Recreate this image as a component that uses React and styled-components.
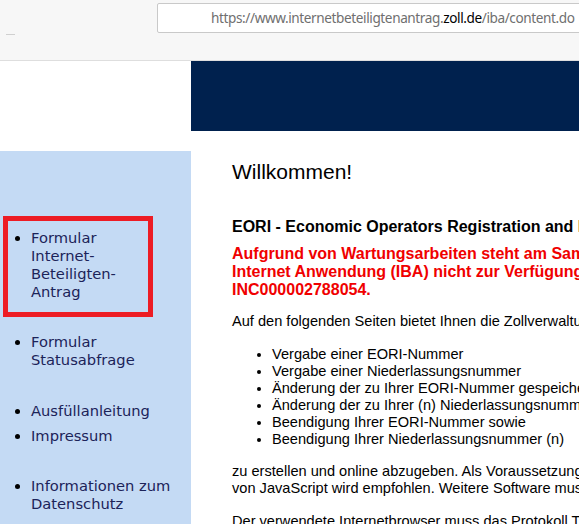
import React from "react"
import styled, { createGlobalStyle } from "styled-components"

const GlobalStyle = createGlobalStyle`
    html, body {
        margin: 0;
        padding: 0;
        background: #ffffff;
        overflow: hidden;
    }
`

const menu = [
    { lines: ["Formular", "Internet-", "Beteiligten-", "Antrag"], gap: 0 },
    { lines: ["Formular", "Statusabfrage"], gap: 32 },
    { lines: ["Ausfüllanleitung"], gap: 33 },
    { lines: ["Impressum"], gap: 7 },
    { lines: ["Informationen zum", "Datenschutz"], gap: 32 },
]

const services = [
    "Vergabe einer EORI-Nummer",
    "Vergabe einer Niederlassungsnummer",
    "Änderung der zu Ihrer EORI-Nummer gespeicherten Daten",
    "Änderung der zu Ihrer (n) Niederlassungsnummer(n) gespeicherten Daten",
    "Beendigung Ihrer EORI-Nummer sowie",
    "Beendigung Ihrer Niederlassungsnummer (n)",
]

export default function App() {
    return (
        <Page>
            <GlobalStyle />
            <BrowserBar>
                <Dash />
                <UrlBox>
                    https://www.internetbeteiligtenantrag.<strong>zoll.de</strong>/iba/content.do
                </UrlBox>
            </BrowserBar>
            <Header>
                <span />
                <Banner />
            </Header>
            <Layout>
                <Sidebar>
                    <RedFrame />
                    <Menu>
                        {menu.map((item, i) => (
                            <MenuItem key={i} gap={item.gap}>
                                {item.lines.map((l, j) => (
                                    <React.Fragment key={j}>
                                        {l}
                                        {j < item.lines.length - 1 && <br />}
                                    </React.Fragment>
                                ))}
                            </MenuItem>
                        ))}
                    </Menu>
                </Sidebar>
                <Main>
                    <Title>Willkommen!</Title>
                    <Subtitle>EORI - Economic Operators Registration and Identification</Subtitle>
                    <Warning>
                        Aufgrund von Wartungsarbeiten steht am Samstag, den 14.09.2019 von 08:00 bis 18:00 Uhr die<br />
                        Internet Anwendung (IBA) nicht zur Verfügung. Bitte beachten Sie die Meldung<br />
                        INC000002788054.
                    </Warning>
                    <Text>
                        Auf den folgenden Seiten bietet Ihnen die Zollverwaltung die Möglichkeit, Anträge zur
                    </Text>
                    <List>
                        {services.map((s) => (
                            <li key={s}>{s}</li>
                        ))}
                    </List>
                    <Text space={15}>
                        zu erstellen und online abzugeben. Als Voraussetzung wird ein aktueller Internetbrowser benötigt, die Aktivierung<br />
                        von JavaScript wird empfohlen. Weitere Software muss nicht installiert werden.
                    </Text>
                    <Text space={16}>
                        Der verwendete Internetbrowser muss das Protokoll TLS 1.2 unterstützen.
                    </Text>
                </Main>
            </Layout>
        </Page>
    )
}

const Page = styled.div`
    width: 579px;
    height: 524px;
    overflow: hidden;
    background: #ffffff;
`

const BrowserBar = styled.div`
    height: 60px;
    background: #f7f7f7;
    border-bottom: 1px solid #dedede;
    display: flex;
    align-items: flex-start;
`

const Dash = styled.div`
    flex-shrink: 0;
    width: 9px;
    height: 1px;
    background: #d0d0d0;
    margin: 34px 0 0 6px;
`

const UrlBox = styled.div`
    flex-shrink: 0;
    margin: 3px 0 0 142px;
    height: 30px;
    width: 440px;
    background: #ffffff;
    border: 1px solid #c9c9c9;
    border-radius: 2px;
    box-sizing: border-box;
    padding-left: 53px;
    font-family: "Noto Sans", "Open Sans", sans-serif;
    font-size: 13.6px;
    letter-spacing: -0.4px;
    line-height: 28px;
    color: #6f6f6f;
    white-space: nowrap;
    strong {
        font-weight: 400;
        color: #000000;
    }
`

const Header = styled.div`
    display: grid;
    grid-template-columns: 191px 1fr;
    height: 90px;
`

const Banner = styled.div`
    height: 70px;
    background: #00214e;
`

const Layout = styled.div`
    display: grid;
    grid-template-columns: 191px 1fr;
    min-height: 373px;
`

const Sidebar = styled.div`
    position: relative;
    background: #c4daf4;
    padding-top: 78px;
`

const RedFrame = styled.div`
    position: absolute;
    left: 3px;
    top: 65px;
    width: 150px;
    height: 101px;
    box-sizing: border-box;
    border: 5px solid #ed1c24;
`

const Menu = styled.ul`
    list-style: disc;
    margin: 0;
    padding-left: 31px;
    font-family: "DejaVu Sans", Verdana, sans-serif;
    font-size: 14.7px;
    line-height: 18px;
    color: #1c2359;
`

const MenuItem = styled.li`
    margin-top: ${props => props.gap}px;
    white-space: nowrap;
    &::marker {
        color: #000000;
    }
`

const Main = styled.div`
    padding: 9px 0 0 41px;
    font-family: "Liberation Sans", Arial, sans-serif;
    color: #000000;
    white-space: nowrap;
`

const Title = styled.h1`
    margin: 0;
    font-size: 21px;
    font-weight: 400;
    line-height: 24px;
`

const Subtitle = styled.h2`
    margin: 34px 0 0;
    font-size: 16px;
    font-weight: 700;
    line-height: 18px;
`

const Warning = styled.p`
    margin: 9px 0 0;
    font-size: 16px;
    font-weight: 700;
    line-height: 18px;
    color: #f00000;
`

const Text = styled.p`
    margin: ${props => props.space || 14}px 0 0;
    font-size: 14.6px;
    line-height: 17px;
`

const List = styled.ul`
    margin: 16px 0 0;
    padding-left: 40px;
    font-size: 14.6px;
    line-height: 17px;
`
